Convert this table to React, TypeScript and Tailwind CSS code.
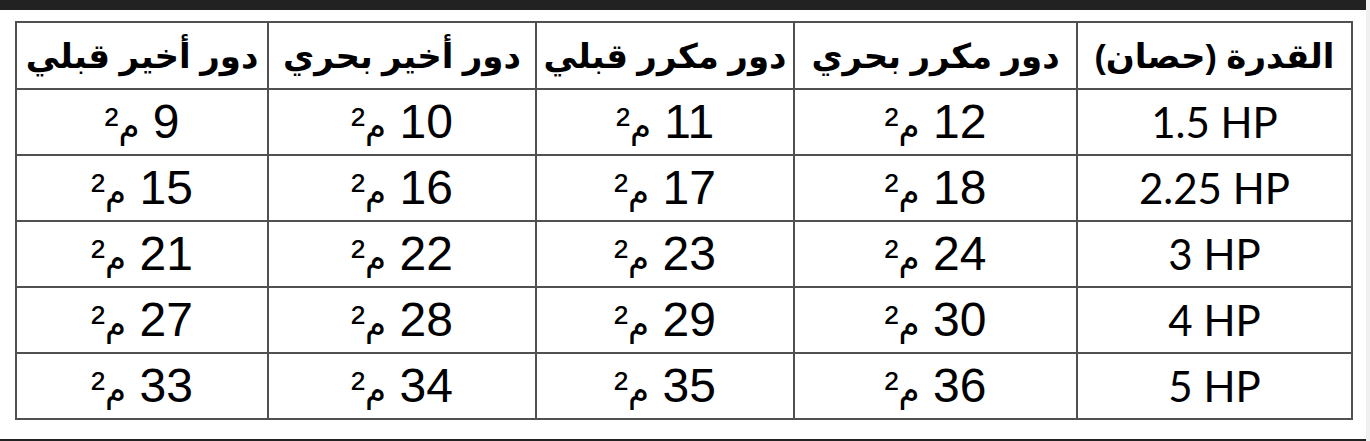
import React from "react";

const headers = ["القدرة (حصان)", "دور مكرر بحري", "دور مكرر قبلي", "دور أخير بحري", "دور أخير قبلي"];
const widths = ["w-[275px]", "w-[283px]", "w-[258px]", "w-[268px]", "w-[252px]"];

const rows = [
  { hp: "1.5 HP", values: [12, 11, 10, 9] },
  { hp: "2.25 HP", values: [18, 17, 16, 15] },
  { hp: "3 HP", values: [24, 23, 22, 21] },
  { hp: "4 HP", values: [30, 29, 28, 27] },
  { hp: "5 HP", values: [36, 35, 34, 33] },
];

export default function App() {
  return (
    <div className="flex w-[1370px] h-[441px] bg-white overflow-hidden">
      <div className="flex flex-col w-[1366px] h-full">
        <div className="h-[10px] bg-[#222222]" />
        <div className="flex-1 pl-[15px] pt-[11px]">
          <table dir="rtl" className="border-collapse table-fixed w-[1336px] text-black">
            <thead>
              <tr className="h-[67px]">
                {headers.map((h, i) => (
                  <th
                    key={h}
                    className={`${widths[i]} border-2 border-[#505050] p-0 text-center font-bold text-[34px] leading-none whitespace-nowrap`}
                    style={{ fontFamily: '"Liberation Sans", "DejaVu Sans", sans-serif' }}
                  >
                    {h}
                  </th>
                ))}
              </tr>
            </thead>
            <tbody>
              {rows.map((r) => (
                <tr key={r.hp} className="h-[66px]">
                  <td className="border-2 border-[#505050] p-0 text-center text-[42px] leading-none font-['Lato',sans-serif]" dir="ltr">
                    {r.hp}
                  </td>
                  {r.values.map((v) => (
                    <td
                      key={v}
                      className="border-2 border-[#505050] p-0 text-center text-[48px] leading-none whitespace-nowrap"
                      style={{ fontFamily: '"Liberation Sans", "DejaVu Sans", sans-serif' }}
                    >
                      {v} <span className="text-[34px]">م</span><span className="text-[42px]">²</span>
                    </td>
                  ))}
                </tr>
              ))}
            </tbody>
          </table>
        </div>
        <div className="h-[2px] bg-[#222222]" />
      </div>
      <div className="w-[4px] h-full bg-[#f0f0f0]" />
    </div>
  );
}
